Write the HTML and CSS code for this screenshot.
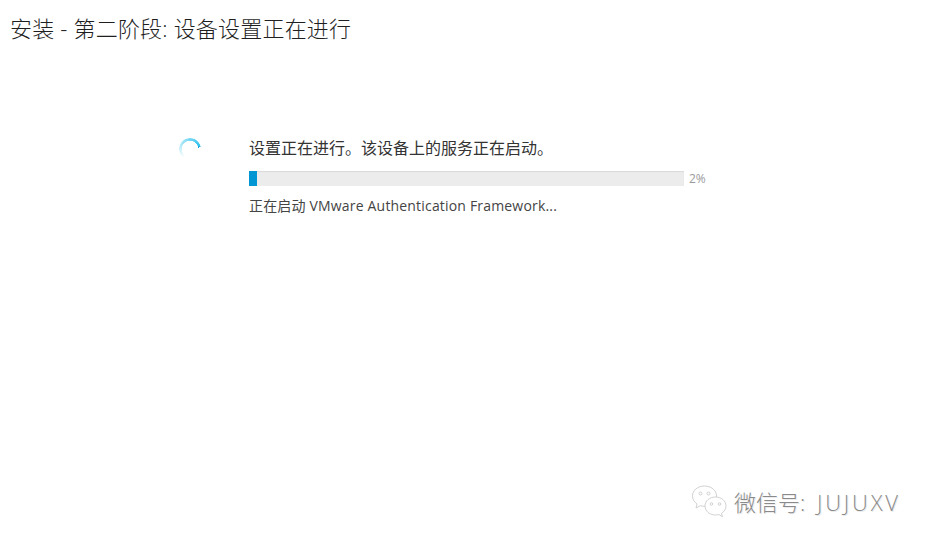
FILE: index.html
```html
<!DOCTYPE html>
<html lang="zh-CN">
<head>
    <meta charset="UTF-8">
    <meta name="viewport" content="width=device-width, initial-scale=1.0">
    <title>安装 - 第二阶段</title>
    <link rel="stylesheet" href="styles.css">
</head>
<body>
    <header class="page-header">
        <h1>安装 - 第二阶段: 设备设置正在进行</h1>
    </header>
    <main class="setup">
        <div class="spinner"></div>
        <section class="status">
            <p class="status-title">设置正在进行。该设备上的服务正在启动。</p>
            <div class="progress-row">
                <div class="progress-track">
                    <div class="progress-fill" style="width: 8px"></div>
                </div>
                <span class="progress-label">2%</span>
            </div>
            <p class="status-detail">正在启动 VMware Authentication Framework...</p>
        </section>
    </main>
    <!-- watermark sits over the page corner -->
    <div class="watermark">
        <svg class="watermark-icon" width="37" height="34" viewBox="0 0 36 34" fill="#fff" stroke="#cccccc" stroke-width="0.9">
            <path d="M13 1C6 1 1 5.500 1 11c0 3.200 1.700 6 4.500 8L4.500 23l4.300-2.300c1.500.4 2.800.6 4.200.6 6.500 0 12-4.500 12-10.300S19.500 1 13 1z"/>
            <circle cx="9" cy="8.500" r="1.500"/>
            <circle cx="17" cy="8.500" r="1.500"/>
            <path d="M24 12c-6 0-10.500 4-10.500 9s4.500 9 10.500 9c1.200 0 2.300-.2 3.400-.5l3.600 2.300-1-3.400c2.600-1.700 4.500-4.300 4.500-7.400 0-5-4.500-9.000-10.500-9.000z"/>
            <circle cx="20" cy="19" r="1.300"/>
            <circle cx="28" cy="19" r="1.300"/>
        </svg>
        <span class="watermark-text">微信号: <span class="watermark-id">JUJUXV</span></span>
    </div>
</body>
</html>
```

FILE: styles.css
```css
html, body {
    height: 100%;
}

body {
    font-family: "Open Sans", "Noto Sans CJK SC", sans-serif;
    background: #fff;
    color: #333;
    margin: 0;
    padding: 0;
    position: relative;
    overflow: hidden;
}

.page-header {
    padding: 12px 10px 0;
}

.page-header h1 {
    margin: 0;
    font-size: 22px;
    font-weight: 300;
    line-height: 32px;
    letter-spacing: 0.2px;
    color: #1f1f1f;
}

.setup {
    display: flex;
    padding: 94px 0 0 179px;
}

.spinner {
    flex: none;
    width: 22px;
    height: 22px;
    margin-right: 48px;
    border-radius: 50%;
    background: conic-gradient(from 215deg, rgba(41, 189, 232, 0) 0deg, #33c3ee 215deg, #0f9ad6 225deg, rgba(41, 189, 232, 0) 225deg);
    -webkit-mask: radial-gradient(circle, transparent 8px, #000 8.500px);
    mask: radial-gradient(circle, transparent 8px, #000 8.500px);
}

.status {
    width: 470px;
}

.status-title {
    margin: -1px 0 0;
    font-size: 16px;
    line-height: 22px;
    color: #333;
}

.progress-row {
    display: flex;
    align-items: center;
    gap: 5px;
    margin-top: 11px;
}

.progress-track {
    width: 435px;
    height: 15px;
    background: #ececec;
    box-shadow: inset 0 1px 1px rgba(0, 0, 0, 0.08);
}

.progress-fill {
    height: 100%;
    background: #0095d3;
}

.progress-label {
    font-size: 12px;
    color: #9a9a9a;
}

.status-detail {
    margin: 9px 0 0;
    font-size: 14px;
    line-height: 20px;
    letter-spacing: 0.18px;
    color: #444;
}

.watermark {
    position: absolute;
    left: 691px;
    top: 485px;
    display: flex;
    align-items: center;
    gap: 6px;
}

.watermark-text {
    font-size: 22px;
    line-height: 34px;
    color: #8a8a8a;
    font-weight: 300;
    text-shadow: 1px 1px 0 #ececec;
}

.watermark-id {
    margin-left: 6px;
    letter-spacing: 2.800px;
}
```
